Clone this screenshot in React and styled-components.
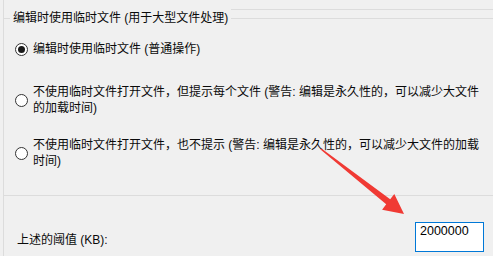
import styled, { createGlobalStyle } from "styled-components"

const Global = createGlobalStyle`
  html, body {
    margin: 0;
    padding: 0;
    background: #f0f0f0;
  }
  body {
    font-family: "Liberation Sans", "Noto Sans CJK SC", sans-serif;
    font-size: 12px;
    color: #0a0a0a;
  }
`

const Page = styled.div`
  position: relative;
  width: 493px;
  height: 256px;
  overflow: hidden;
  background: #f0f0f0;
`

const Frame = styled.div`
  margin-left: 3px;
  height: 256px;
  border-left: 1px solid #dcdcdc;
  display: flex;
  flex-direction: column;
`

const TitleRow = styled.div`
  display: flex;
  align-items: flex-start;
  margin-top: 8px;
  height: 20px;
`

const LeftTick = styled.div`
  width: 6px;
  margin-top: 10px;
  border-top: 1px solid #dcdcdc;
`

const Title = styled.span`
  padding: 0 3px;
  line-height: 20px;
  white-space: nowrap;
`

const Rule = styled.div`
  flex: 1;
  margin-top: 1px;
  height: 8px;
  border-top: 1px solid #dcdcdc;
  border-bottom: 1px solid #dcdcdc;
`

const Options = styled.div`
  display: flex;
  flex-direction: column;
  padding-left: 11px;
`

const Option = styled.label`
  display: flex;
  align-items: center;
  gap: 5px;
  margin-top: ${(p) => p.$top}px;
  line-height: 16px;
`

const Radio = styled.span`
  flex: none;
  width: 13px;
  height: 13px;
  box-sizing: border-box;
  border: 1px solid #333;
  border-radius: 50%;
  background: #fff;
  display: flex;
  align-items: center;
  justify-content: center;

  &::after {
    content: "";
    width: 7px;
    height: 7px;
    border-radius: 50%;
    background: #1a1a1a;
    display: ${(p) => (p.$checked ? "block" : "none")};
  }
`

const OptionText = styled.span`
  white-space: nowrap;
`

const Divider = styled.div`
  margin-top: 26px;
  border-top: 1px solid #dcdcdc;
`

const ThresholdRow = styled.div`
  display: flex;
  justify-content: space-between;
  align-items: flex-start;
  padding: 0 9px 0 13px;
`

const Label = styled.span`
  margin-top: 36px;
  line-height: 16px;
`

const Field = styled.input`
  margin-top: 26px;
  width: 69px;
  height: 30px;
  box-sizing: border-box;
  border: 1px solid #0078d7;
  background: #fff;
  padding: 1px 4px 13px;
  font-family: "Liberation Sans", sans-serif;
  font-size: 12.5px;
  color: #000;
  outline: none;
`

const Arrow = styled.svg`
  position: absolute;
  left: 0;
  top: 0;
  pointer-events: none;
`

function App() {
  return (
    <Page>
      <Global />
      <Frame>
        <TitleRow>
          <LeftTick />
          <Title>编辑时使用临时文件 (用于大型文件处理)</Title>
          <Rule />
        </TitleRow>
        <Options>
          <Option $top={13}>
            <Radio $checked />
            <OptionText>编辑时使用临时文件 (普通操作)</OptionText>
          </Option>
          <Option $top={27}>
            <Radio />
            <OptionText>
              不使用临时文件打开文件，但提示每个文件 (警告: 编辑是永久性的，可以减少大文件
              <br />
              的加载时间)
            </OptionText>
          </Option>
          <Option $top={21}>
            <Radio />
            <OptionText>
              不使用临时文件打开文件，也不提示 (警告: 编辑是永久性的，可以减少大文件的加载
              <br />
              时间)
            </OptionText>
          </Option>
        </Options>
        <Divider />
        <ThresholdRow>
          <Label>上述的阈值 (KB):</Label>
          <Field defaultValue="2000000" />
        </ThresholdRow>
      </Frame>
      <Arrow width="493" height="256" viewBox="0 0 493 256">
        <polygon
          points="321.5,148.4 390.2,199.3 394.3,193.9 404,214 382.1,209.7 386.2,204.3 320.5,149.6"
          fill="#f03a34"
        />
      </Arrow>
    </Page>
  )
}

export default App
